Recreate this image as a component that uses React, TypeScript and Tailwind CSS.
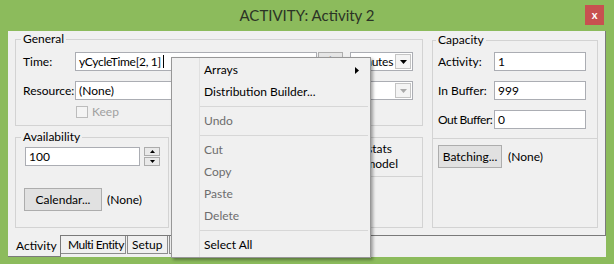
import React from "react";

const fieldBase =
  "h-[19px] bg-white border border-[#abadb3] flex items-center overflow-hidden whitespace-nowrap";

function DropArrow({ disabled }: { disabled?: boolean }) {
  return (
    <div className="ml-auto mr-px h-[15px] w-[16px] shrink-0 flex items-center justify-center bg-[#f4f4f4] border border-[#c4c4c4]">
      <svg width="7" height="4" viewBox="0 0 7 4">
        <path d="M0 0h7L3.5 4z" fill={disabled ? "#a9a9a9" : "#000"} />
      </svg>
    </div>
  );
}

function Btn({ className, children }: { className: string; children: React.ReactNode }) {
  return (
    <div
      className={`h-[23px] flex items-center justify-center bg-[#e1e1e1] border border-[#adadad] ${className}`}
    >
      {children}
    </div>
  );
}

function MenuItem({ label, disabled, sub }: { label: string; disabled?: boolean; sub?: boolean }) {
  return (
    <div
      className={`h-[22px] flex items-center pl-[4px] pr-[11px] ${
        disabled ? "text-[#6d6d6d]" : "text-black"
      }`}
    >
      {label}
      {sub && (
        <svg className="ml-auto" width="4" height="7" viewBox="0 0 4 7">
          <path d="M0 0l4 3.5L0 7z" fill="#000" />
        </svg>
      )}
    </div>
  );
}

function MenuSep() {
  return (
    <div className="h-[7px] pt-[3px] mr-[2px]">
      <div className="h-px bg-[#d7d7d7]" />
    </div>
  );
}

export default function App() {
  return (
    <div className="relative w-[614px] h-[264px] bg-[#8cbb5c] font-['Lato',sans-serif] text-[12px] text-black whitespace-nowrap overflow-hidden">
      {/* Title bar */}
      <div className="grid grid-cols-[1fr_auto_1fr] h-[31px]">
        <div />
        <div className="flex items-center pb-px text-[15px] text-[#2b3326]">
          ACTIVITY: Activity 2
        </div>
        <div className="flex justify-end items-start pt-[5px] pr-[10px]">
          <div className="w-[19px] h-[20px] bg-[#c75050] flex items-center justify-center text-white text-[11px] font-bold leading-none pb-px">
            x
          </div>
        </div>
      </div>

      {/* Dialog body */}
      <div className="ml-[8px] w-[598px] h-[226px] bg-[#f0f0f0] flex flex-col">
        {/* Tab page */}
        <div className="h-[205px] border-r border-b border-[#7a7a7a] pl-[7px] pt-[1px] flex gap-[9px]">
          {/* Left column */}
          <div className="w-[408px] flex flex-col gap-[4px]">
            <fieldset className="h-[94px] border border-[#d3d3d3] pl-[7px] pt-[6px]">
              <legend className="-ml-[2px] px-[2px] leading-[14px]">General</legend>
              <div className="flex items-center">
                <span className="w-[52px]">Time:</span>
                <div className={`${fieldBase} w-[242px] pl-[3px] tracking-[-0.3px]`}>
                  yCycleTime[2, 1]
                  <span className="ml-[2px] w-px h-[13px] bg-black" />
                </div>
                <div className="ml-px h-[19px] w-[25px] bg-[#e6e6e6] border border-[#adadad] flex items-start justify-center pt-px text-[#9a9a9a] text-[10px] leading-none">
                  ⁝
                </div>
                <div className={`${fieldBase} ml-[7px] w-[63px] pl-[1px]`}>
                  <span className="flex-1 min-w-0 overflow-hidden tracking-[-0.3px]">Minutes</span>
                  <DropArrow />
                </div>
              </div>
              <div className="flex items-center mt-[10px]">
                <span className="w-[52px]">Resource:</span>
                <div className={`${fieldBase} w-[338px] pl-[3px]`}>
                  (None)
                  <DropArrow disabled />
                </div>
              </div>
              <div className="flex items-center mt-[6px] ml-[53px]">
                <div className="w-[12px] h-[12px] border border-[#bcbcbc] bg-[#f4f4f4]" />
                <span className="ml-[4px] text-[#a0a0a0] leading-[12px]">Keep</span>
              </div>
            </fieldset>

            <div className="flex gap-[9px]">
              <fieldset className="w-[154px] h-[98px] border border-[#d3d3d3] pl-[9px] pt-[3px]">
                <legend className="-ml-[4px] px-[2px] leading-[14px]">Availability</legend>
                <div className="flex items-center">
                  <div className={`${fieldBase} w-[115px] pl-[3px]`}>100</div>
                  <div className="ml-[4px] flex flex-col gap-px">
                    <div className="w-[16px] h-[9px] bg-[#e9e9e9] border border-[#acacac] flex items-center justify-center">
                      <svg width="5" height="3" viewBox="0 0 5 3">
                        <path d="M0 3h5L2.5 0z" fill="#000" />
                      </svg>
                    </div>
                    <div className="w-[16px] h-[9px] bg-[#e9e9e9] border border-[#acacac] flex items-center justify-center">
                      <svg width="5" height="3" viewBox="0 0 5 3">
                        <path d="M0 0h5L2.5 3z" fill="#000" />
                      </svg>
                    </div>
                  </div>
                </div>
                <div className="flex items-center mt-[22px] -ml-px">
                  <Btn className="w-[78px]">Calendar...</Btn>
                  <span className="ml-[5px]">(None)</span>
                </div>
              </fieldset>

              <div className="mt-[7px] h-[91px] w-[245px] border border-[#d3d3d3] flex flex-col pt-[3px]">
                <div className="leading-[15px] text-right pr-[30px]">Include in stats</div>
                <div className="leading-[15px] text-right pr-[24px]">Show in model</div>
                <div className="mt-[5px] h-px bg-[#d3d3d3]" />
              </div>
            </div>
          </div>

          {/* Right column */}
          <fieldset className="mt-px w-[166px] h-[195px] border border-[#d3d3d3] pl-[5px] pt-[5px]">
            <legend className="-ml-[2px] px-[2px] leading-[14px]">Capacity</legend>
            <div className="flex flex-col gap-[10px]">
              <div className="flex items-center">
                <span className="w-[56px]">Activity:</span>
                <div className={`${fieldBase} w-[92px] pl-[3px]`}>1</div>
              </div>
              <div className="flex items-center">
                <span className="w-[56px]">In Buffer:</span>
                <div className={`${fieldBase} w-[92px] pl-[3px]`}>999</div>
              </div>
              <div className="flex items-center">
                <span className="w-[56px] tracking-[-0.5px]">Out Buffer:</span>
                <div className={`${fieldBase} w-[92px] pl-[3px]`}>0</div>
              </div>
            </div>
            <div className="mt-[9px] -ml-[5px] h-px bg-[#d3d3d3]" />
            <div className="flex items-center mt-[6px]">
              <Btn className="w-[64px]">Batching...</Btn>
              <span className="ml-[6px]">(None)</span>
            </div>
          </fieldset>
        </div>

        {/* Tabs */}
        <div className="flex h-[21px] items-start">
          <div className="relative -mt-px h-[22px] w-[53px] bg-[#f0f0f0] border-r border-b border-[#7a7a7a] pl-[8px] flex items-center">
            Activity
          </div>
          <div className="h-[18px] w-[65px] border-r border-b border-[#8c8c8c] pl-[7px] flex items-center tracking-[-0.5px]">
            Multi Entity
          </div>
          <div className="ml-px h-[18px] w-[41px] border-l border-r border-b border-[#8c8c8c] pl-[4px] flex items-center">
            Setup
          </div>
          <div className="ml-px h-[18px] w-[60px] border-l border-r border-b border-[#8c8c8c]" />
        </div>
      </div>

      {/* Context menu */}
      <div className="absolute left-[171px] top-[57px] w-[200px] bg-[#f0f0f0] border border-[#979797] shadow-[2px_2px_3px_rgba(0,0,0,0.35)] flex">
        <div className="w-[28px] border-r border-[#e0e0e0]" />
        <div className="flex-1 flex flex-col pt-px pb-px">
          <MenuItem label="Arrays" sub />
          <MenuItem label="Distribution Builder..." />
          <MenuSep />
          <MenuItem label="Undo" disabled />
          <MenuSep />
          <MenuItem label="Cut" disabled />
          <MenuItem label="Copy" disabled />
          <MenuItem label="Paste" disabled />
          <MenuItem label="Delete" disabled />
          <MenuSep />
          <MenuItem label="Select All" />
        </div>
      </div>
    </div>
  );
}
